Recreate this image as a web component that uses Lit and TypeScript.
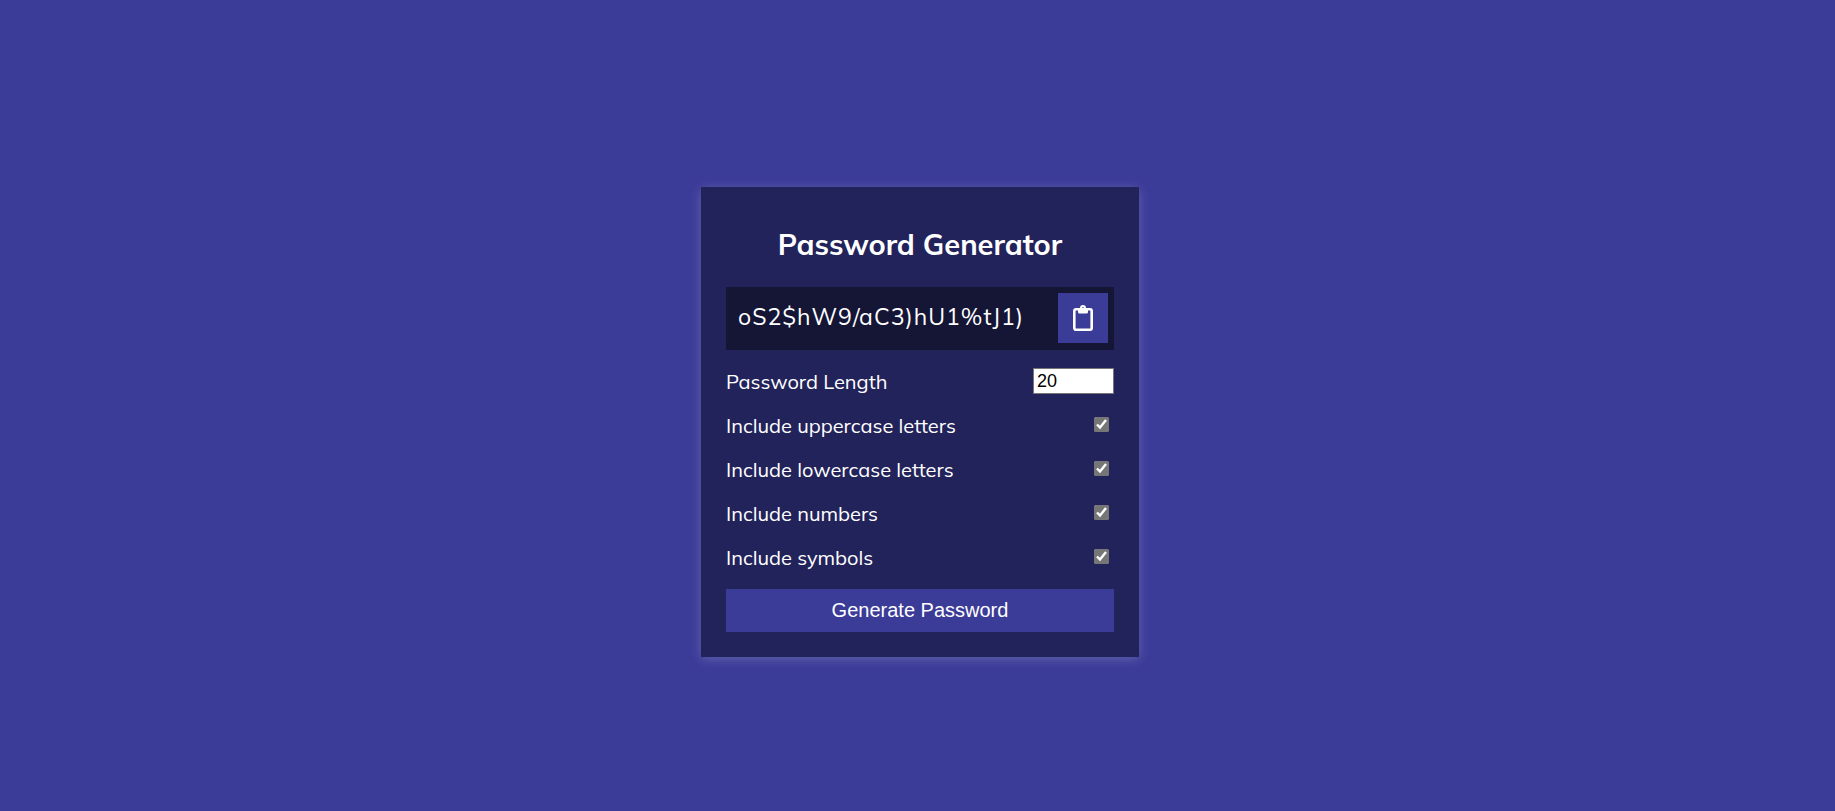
import { LitElement, html, css } from "lit";
import { customElement, state } from "lit/decorators.js";

type OptionKey = "uppercase" | "lowercase" | "numbers" | "symbols";

const POOLS: Record<OptionKey, string> = {
  uppercase: "ABCDEFGHIJKLMNOPQRSTUVWXYZ",
  lowercase: "abcdefghijklmnopqrstuvwxyz",
  numbers: "0123456789",
  symbols: "!@#$%^&*(){}[]=<>/,.",
};

const OPTIONS: { key: OptionKey; label: string }[] = [
  { key: "uppercase", label: "Include uppercase letters" },
  { key: "lowercase", label: "Include lowercase letters" },
  { key: "numbers", label: "Include numbers" },
  { key: "symbols", label: "Include symbols" },
];

@customElement("app-root")
export class AppRoot extends LitElement {
  static styles = css`
    :host {
      box-sizing: border-box;
      display: flex;
      align-items: center;
      justify-content: center;
      min-height: 100vh;
      padding: 33px 0 0 5px;
      background: #3b3b98;
      color: #fff;
      font-family: Mulish, Muli, Nunito, Lato, sans-serif;
      font-size: 20px;
      line-height: 25px;
    }
    * {
      box-sizing: border-box;
    }
    .card {
      width: 438px;
      max-width: 100%;
      padding: 25px;
      background: #23235b;
      box-shadow: 0 2px 12px rgba(255, 255, 255, 0.2);
    }
    .title {
      margin: 13px 0 24px;
      font-size: 29px;
      font-weight: 700;
      line-height: 38px;
      text-align: center;
    }
    .result {
      display: flex;
      align-items: flex-start;
      justify-content: space-between;
      padding: 6px 6px 7px 12px;
      margin-bottom: 18px;
      background: rgba(0, 0, 0, 0.4);
    }
    .password {
      min-width: 0;
      padding-top: 9px;
      font-size: 23px;
      line-height: 29px;
      letter-spacing: 1px;
      overflow-wrap: anywhere;
    }
    .btn {
      border: none;
      background: #3b3b98;
      color: #fff;
      font-family: "Liberation Sans", Arial, sans-serif;
      font-size: 20px;
      line-height: 23px;
      cursor: pointer;
    }
    .copy {
      display: grid;
      place-items: center;
      flex: none;
      width: 50px;
      height: 50px;
      padding: 0;
    }
    .icon {
      display: block;
      width: 20px;
      height: 26px;
    }
    .settings {
      display: grid;
      gap: 19px;
      margin-bottom: 19px;
    }
    .setting {
      display: flex;
      align-items: center;
      justify-content: space-between;
    }
    .length {
      width: 81px;
      height: 26px;
      padding: 1px 3px;
      border: 1px solid #767676;
      border-radius: 0;
      background: #fff;
      color: #000;
      font-family: "Liberation Sans", Arial, sans-serif;
      font-size: 18px;
    }
    .check {
      width: 15px;
      height: 15px;
      margin: 0 5px 2px 0;
      accent-color: #767676;
    }
    .generate {
      display: block;
      width: 100%;
      padding: 10px;
    }
  `;

  @state() private password = "oS2$hW9/aC3)hU1%tJ1)";
  @state() private length = 20;
  @state() private enabled: Record<OptionKey, boolean> = {
    uppercase: true,
    lowercase: true,
    numbers: true,
    symbols: true,
  };

  private generate() {
    const pools = OPTIONS.filter((o) => this.enabled[o.key]).map((o) => POOLS[o.key]);
    if (!pools.length) {
      this.password = "";
      return;
    }
    this.password = Array.from({ length: this.length }, (_, i) => {
      const pool = pools[i % pools.length];
      return pool[Math.floor(Math.random() * pool.length)];
    }).join("");
  }

  private copy() {
    navigator.clipboard?.writeText(this.password);
  }

  render() {
    return html`
      <main class="card">
        <h2 class="title">Password Generator</h2>
        <div class="result">
          <span class="password">${this.password}</span>
          <button class="btn copy" type="button" aria-label="Copy password" @click=${this.copy}>
            <svg class="icon" viewBox="0 0 20 26" fill="none" aria-hidden="true">
              <rect x="1.3" y="4.3" width="17.4" height="20.4" rx="1.6" stroke="#fff" stroke-width="2.6" />
              <path
                fill="#fff"
                fill-rule="evenodd"
                d="M5 4.5 A1.5 1.5 0 0 1 6.5 3 H7 A3 3 0 0 1 13 3 H13.5 A1.5 1.5 0 0 1 15 4.5 V7 A1.5 1.5 0 0 1 13.5 8.5 H6.5 A1.5 1.5 0 0 1 5 7 Z M10 2.2 A1.1 1.1 0 1 0 10 4.4 A1.1 1.1 0 1 0 10 2.2 Z"
              />
            </svg>
          </button>
        </div>
        <div class="settings">
          <div class="setting">
            <label for="length">Password Length</label>
            <input
              id="length"
              class="length"
              type="number"
              min="4"
              max="20"
              .value=${String(this.length)}
              @input=${(e: Event) => (this.length = Number((e.target as HTMLInputElement).value))}
            />
          </div>
          ${OPTIONS.map(
            ({ key, label }) => html`
              <div class="setting">
                <label for=${key}>${label}</label>
                <input
                  id=${key}
                  class="check"
                  type="checkbox"
                  .checked=${this.enabled[key]}
                  @change=${(e: Event) =>
                    (this.enabled = { ...this.enabled, [key]: (e.target as HTMLInputElement).checked })}
                />
              </div>
            `
          )}
        </div>
        <button class="btn generate" type="button" @click=${this.generate}>Generate Password</button>
      </main>
    `;
  }
}
